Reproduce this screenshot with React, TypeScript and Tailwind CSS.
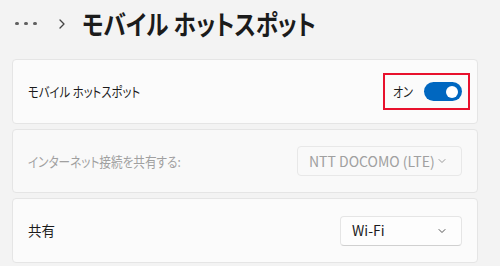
import React from "react";

const font = { fontFamily: '"Noto Sans CJK JP", "Noto Sans", sans-serif' };

function Chevron({ color }: { color: string }) {
  return (
    <svg width="10" height="10" viewBox="0 0 10 10" fill="none">
      <path d="M2 3.5 L5 6.5 L8 3.5" stroke={color} strokeWidth="1" strokeLinecap="round" strokeLinejoin="round" />
    </svg>
  );
}

export default function App() {
  return (
    <div className="w-[500px] h-[266px] overflow-hidden bg-[#f3f3f3] text-[#1b1b1b] [font-feature-settings:'palt']" style={font}>
      <div className="flex items-center h-[59px] pl-[15px] pb-[12px]">
        <div className="flex items-center gap-[5.5px]">
          <div className="w-[3.5px] h-[3.5px] rounded-full bg-[#606060]" />
          <div className="w-[3.5px] h-[3.5px] rounded-full bg-[#606060]" />
          <div className="w-[3.5px] h-[3.5px] rounded-full bg-[#606060]" />
        </div>
        <svg className="ml-[21px]" width="8" height="12" viewBox="0 0 8 12" fill="none">
          <path d="M2 2 L6 6 L2 10" stroke="#444" strokeWidth="1.3" strokeLinecap="round" strokeLinejoin="round" />
        </svg>
        <h1 className="ml-[16px] text-[27px] font-bold leading-none whitespace-nowrap inline-block origin-left scale-x-[0.84]">モバイル ホットスポット</h1>
      </div>
      <div className="flex flex-col gap-[5px] px-[12px]">
        <div className="h-[65px] w-[466px] bg-[#fbfbfb] border border-[#e5e5e5] rounded-[4px] flex items-center justify-between pl-[15px] pr-[7px]">
          <span className="text-[13.5px] inline-block origin-left scale-x-[0.84]">モバイル ホットスポット</span>
          <div className="w-[87px] h-[37px] border-2 border-[#e8112d] flex items-center pl-[8px] gap-[7px] whitespace-nowrap">
            <span className="text-[13.5px] inline-block origin-left scale-x-[0.82]">オン</span>
            <div className="w-[38px] h-[19px] rounded-full bg-[#0067c0] flex items-center justify-end pr-[4px] shrink-0">
              <div className="w-[12px] h-[12px] rounded-full bg-white" />
            </div>
          </div>
        </div>
        <div className="h-[64px] w-[466px] bg-[#f9f9f9] border border-[#e5e5e5] rounded-[4px] flex items-center justify-between pl-[15px] pr-[15px]">
          <span className="text-[13.5px] text-[#a0a0a0] inline-block origin-left scale-x-[0.86]">インターネット接続を共有する:</span>
          <div className="w-[165px] h-[30px] border border-[#e8e8e8] rounded-[4px] bg-[#f9f9f9] flex items-center justify-between pl-[11px] pr-[14px]">
            <span className="text-[14px] text-[#a0a0a0]">NTT DOCOMO (LTE)</span>
            <Chevron color="#9a9a9a" />
          </div>
        </div>
        <div className="h-[65px] w-[466px] bg-[#fbfbfb] border border-[#e5e5e5] rounded-[4px] flex items-center justify-between pl-[15px] pr-[15px]">
          <span className="text-[13.5px]">共有</span>
          <div className="w-[122px] h-[30px] border border-[#e5e5e5] border-b-[#d0d0d0] rounded-[4px] bg-[#fdfdfd] flex items-center justify-between pl-[11px] pr-[14px]">
            <span className="text-[14px]">Wi-Fi</span>
            <Chevron color="#555" />
          </div>
        </div>
        <div className="h-[20px] w-[466px] bg-[#fbfbfb] border border-[#e5e5e5] rounded-[4px]" />
      </div>
    </div>
  );
}
